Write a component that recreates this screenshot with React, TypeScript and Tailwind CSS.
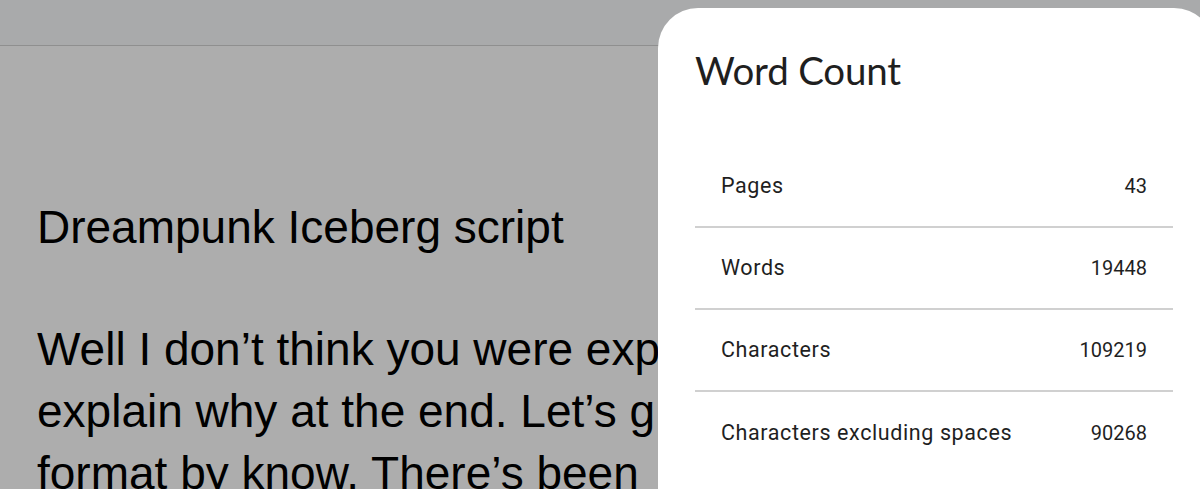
import React from "react";

const stats = [
  { label: "Pages", value: "43" },
  { label: "Words", value: "19448" },
  { label: "Characters", value: "109219" },
  { label: "Characters excluding spaces", value: "90268" },
];

export default function App() {
  return (
    <div className="relative w-[1200px] h-[489px] overflow-hidden bg-[#adadad]">
      {/* Toolbar strip behind the overlay */}
      <div className="h-[46px] bg-[#a9aaab] border-b border-[#8f8f8f]" />

      {/* Document page */}
      <div className="w-[658px] overflow-hidden pl-[37px] pt-[150px] font-['Liberation_Sans',Arial,sans-serif] text-black text-[46px] leading-[62px] whitespace-nowrap">
        <p>Dreampunk Iceberg script</p>
        <p className="mt-[60px]">Well I don’t think you were exp</p>
        <p>explain why at the end. Let’s g</p>
        <p>format by know. There’s been</p>
      </div>

      {/* Word count dialog */}
      <div className="absolute left-[658px] top-[8px] w-[556px] h-[520px] bg-white rounded-[40px] pl-[37px] pt-[40px]">
        <h2 className="font-['Lato','Open_Sans',sans-serif] text-[38.5px] leading-[44px] text-[#1f1f1f] tracking-[-0.2px]">
          Word Count
        </h2>
        <div className="mt-[54px] w-[478px] text-[#1f1f1f]">
          {stats.map((s, i) => (
            <div
              key={s.label}
              className={`flex items-center justify-between h-[82px] px-[26px] ${
                i < stats.length - 1 ? "border-b-2 border-[#d0d0d0]" : ""
              }`}
            >
              <span className="font-['Roboto',sans-serif] text-[21.5px] tracking-[0.6px]">{s.label}</span>
              <span className="font-['Roboto',sans-serif] text-[20px]">{s.value}</span>
            </div>
          ))}
        </div>
      </div>
    </div>
  );
}
